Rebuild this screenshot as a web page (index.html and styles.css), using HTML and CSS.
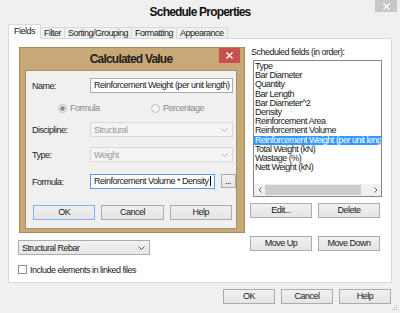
FILE: index.html
```html
<!DOCTYPE html>
<html lang="en">
<head>
    <meta charset="UTF-8">
    <meta name="viewport" content="width=device-width, initial-scale=1.0">
    <title>Schedule Properties</title>
    <link rel="stylesheet" href="styles.css">
</head>
<body>
    <div class="window">
        <div class="titlebar">
            <span class="title">Schedule Properties</span>
            <button class="win-close" title="Close">
                <svg width="7" height="7" viewBox="0 0 7 7"><path d="M0.5 0.5L6.5 6.5M6.5 0.5L0.5 6.5" stroke="#fff" stroke-width="1.4"/></svg>
            </button>
        </div>

        <div class="tabs">
            <div class="tab active">Fields</div>
            <div class="tab">Filter</div>
            <div class="tab">Sorting/Grouping</div>
            <div class="tab">Formatting</div>
            <div class="tab">Appearance</div>
        </div>

        <div class="panel">
            <div class="left-col">
                <div class="dialog">
                    <div class="dlg-title">Calculated Value</div>
                    <button class="dlg-close" title="Close">
                        <svg width="7" height="7" viewBox="0 0 7 7"><path d="M0.5 0.5L6.5 6.5M6.5 0.5L0.5 6.5" stroke="#fff" stroke-width="1.4"/></svg>
                    </button>
                    <div class="dlg-body">
                        <div class="field-row">
                            <label>Name:</label>
                            <div class="input">Reinforcement Weight (per unit length)</div>
                        </div>

                        <div class="radios">
                            <span class="radio checked"><span class="dot"></span>Formula</span>
                            <span class="radio"><span class="dot"></span>Percentage</span>
                        </div>

                        <div class="field-row gap-discipline">
                            <label>Discipline:</label>
                            <div class="select disabled">
                                <span>Structural</span>
                                <svg width="7" height="4" viewBox="0 0 7 4"><path d="M0.5 0.5L3.5 3.5L6.5 0.5" fill="none" stroke="#b5b5b5"/></svg>
                            </div>
                        </div>

                        <div class="field-row gap-type">
                            <label>Type:</label>
                            <div class="select disabled">
                                <span>Weight</span>
                                <svg width="7" height="4" viewBox="0 0 7 4"><path d="M0.5 0.5L3.5 3.5L6.5 0.5" fill="none" stroke="#b5b5b5"/></svg>
                            </div>
                        </div>

                        <div class="field-row gap-formula">
                            <label>Formula:</label>
                            <div class="formula">
                                <div class="input focused">Reinforcement Volume * Density<span class="caret"></span></div>
                                <button class="btn dots">...</button>
                            </div>
                        </div>

                        <div class="dlg-buttons">
                            <button class="btn default">OK</button>
                            <button class="btn">Cancel</button>
                            <button class="btn">Help</button>
                        </div>
                    </div>
                </div>

                <div class="select category">
                    <span>Structural Rebar</span>
                    <svg width="7" height="4" viewBox="0 0 7 4"><path d="M0.5 0.5L3.5 3.5L6.5 0.5" fill="none" stroke="#555"/></svg>
                </div>

                <label class="check"><span class="box"></span>Include elements in linked files</label>
            </div>

            <div class="right-col">
                <div class="list-label">Scheduled fields (in order):</div>
                <div class="listbox">
                    <ul>
                        <li>Type</li>
                        <li>Bar Diameter</li>
                        <li>Quantity</li>
                        <li>Bar Length</li>
                        <li>Bar Diameter^2</li>
                        <li>Density</li>
                        <li>Reinforcement Area</li>
                        <li>Reinforcement Volume</li>
                        <li class="selected">Reinforcement Weight (per unit length)</li>
                        <li>Total Weight (kN)</li>
                        <li>Wastage (%)</li>
                        <li>Nett Weight (kN)</li>
                    </ul>
                    <div class="hscroll">
                        <span class="arrow">
                            <svg width="4" height="6" viewBox="0 0 4 6"><path d="M3.5 0.5L1 3L3.5 5.5" fill="none" stroke="#606060"/></svg>
                        </span>
                        <span class="thumb"></span>
                        <span class="spacer"></span>
                        <span class="arrow">
                            <svg width="4" height="6" viewBox="0 0 4 6"><path d="M0.5 0.5L3 3L0.5 5.5" fill="none" stroke="#606060"/></svg>
                        </span>
                    </div>
                </div>
                <div class="btn-row">
                    <button class="btn">Edit...</button>
                    <button class="btn">Delete</button>
                </div>
                <div class="btn-row move">
                    <button class="btn">Move Up</button>
                    <button class="btn">Move Down</button>
                </div>
            </div>
        </div>

        <div class="footer">
            <button class="btn">OK</button>
            <button class="btn">Cancel</button>
            <button class="btn">Help</button>
        </div>

        <svg class="grip" width="6" height="6" viewBox="0 0 6 6">
            <rect x="4" y="0" width="1" height="1" fill="#b4b4b4"/>
            <rect x="2" y="2" width="1" height="1" fill="#b4b4b4"/>
            <rect x="4" y="2" width="1" height="1" fill="#b4b4b4"/>
            <rect x="0" y="4" width="1" height="1" fill="#b4b4b4"/>
            <rect x="2" y="4" width="1" height="1" fill="#b4b4b4"/>
            <rect x="4" y="4" width="1" height="1" fill="#b4b4b4"/>
        </svg>
    </div>
</body>
</html>
```

FILE: styles.css
```css
* {
    box-sizing: border-box;
}
body {
    margin: 0;
    background-color: #f0f0f0;
    font-family: "Liberation Sans", Arial, sans-serif;
    font-size: 9px;
    letter-spacing: -0.5px;
    color: #1a1a1a;
}
button {
    font: inherit;
    letter-spacing: inherit;
    color: inherit;
    padding: 0;
}
.window {
    position: relative;
    width: 400px;
    height: 313px;
    padding: 0 8px;
    overflow: hidden;
}

/* title bar */
.titlebar {
    height: 24px;
    display: flex;
    align-items: center;
    justify-content: center;
}
.title {
    font-size: 12px;
    font-weight: bold;
    letter-spacing: -0.8px;
    color: #111;
}
.win-close {
    position: absolute;
    top: 0;
    right: 3px;
    width: 22px;
    height: 12px;
    border: none;
    background-color: #c7c7c7;
    display: flex;
    align-items: center;
    justify-content: center;
}

/* tabs */
.tabs {
    display: flex;
    align-items: flex-end;
    height: 14px;
}
.tab {
    height: 11px;
    padding: 0 3px;
    line-height: 10px;
    border: 1px solid #d9d9d9;
    border-bottom: none;
    margin-right: -1px;
    background-color: #f0f0f0;
}
.tab.active {
    position: relative;
    z-index: 1;
    height: 15px;
    margin-bottom: -1px;
    padding: 0 5px;
    line-height: 13px;
    background-color: #fff;
}

/* panel */
.panel {
    height: 245px;
    border: 1px solid #d9d9d9;
    background-color: #fff;
    display: grid;
    grid-template-columns: 226px 132px;
    column-gap: 5px;
    align-items: start;
    padding: 8px 0 0 10px;
}

/* calculated value dialog */
.dialog {
    position: relative;
    height: 186px;
    background-color: #c9a878;
    border: 1px solid #a8895c;
    padding: 0 7px 3px 5px;
}
.dlg-title {
    height: 22px;
    line-height: 22px;
    text-align: center;
    font-size: 12px;
    font-weight: bold;
    letter-spacing: -0.8px;
    color: #1e1e1e;
}
.dlg-close {
    position: absolute;
    top: 0;
    right: 4px;
    width: 21px;
    height: 15px;
    border: none;
    background-color: #c75050;
    display: flex;
    align-items: center;
    justify-content: center;
}
.dlg-body {
    height: 159px;
    background-color: #f0f0f0;
    border: 1px solid #a88f6c;
    padding: 7px 3px 8px 6px;
}
.field-row {
    display: grid;
    grid-template-columns: 58px 1fr;
    align-items: center;
    height: 15px;
}
.gap-discipline {
    margin-top: 9px;
}
.gap-type {
    margin-top: 10px;
}
.gap-formula {
    margin-top: 12px;
}
.input {
    height: 15px;
    line-height: 13px;
    padding: 0 3px;
    background-color: #fff;
    border: 1px solid #abadb3;
    white-space: nowrap;
    overflow: hidden;
}
.input.focused {
    border-color: #569de5;
}
.caret {
    display: inline-block;
    width: 1px;
    height: 10px;
    margin-left: 1px;
    vertical-align: -2px;
    background-color: #000;
}
.radios {
    display: grid;
    grid-template-columns: 93px auto;
    height: 9px;
    margin-top: 11px;
    padding-left: 26px;
    color: #8a8a8a;
}
.radio {
    display: flex;
    align-items: center;
    gap: 3px;
    line-height: 9px;
}
.radio .dot {
    width: 9px;
    height: 9px;
    border-radius: 50%;
    border: 1px solid #bcbcbc;
    background-color: #f4f4f4;
}
.radio.checked .dot {
    background: radial-gradient(circle, #8c8c8c 0 2px, #f4f4f4 2.5px);
}
.select {
    height: 15px;
    padding: 0 4px 0 3px;
    display: flex;
    align-items: center;
    justify-content: space-between;
    border: 1px solid #acacac;
    background: linear-gradient(#f2f2f2, #e5e5e5);
}
.select.disabled {
    color: #9a9a9a;
    border-color: #d9d9d9;
    background: #f4f4f4;
}
.formula {
    display: flex;
    gap: 6px;
}
.formula .input {
    flex: 1;
}
.btn {
    height: 15px;
    line-height: 13px;
    border: 1px solid #acacac;
    background: linear-gradient(#f0f0f0, #e5e5e5);
    text-align: center;
}
.btn.dots {
    width: 15px;
    height: 14px;
}
.btn.default {
    border-color: #7eb4ea;
}
.dlg-buttons {
    display: grid;
    grid-template-columns: repeat(3, 1fr);
    column-gap: 6px;
    margin: 16px 0 0 1px;
    width: 199px;
}

/* below the dialog */
.category {
    width: 132px;
    margin: 7px 0 0 -1px;
}
.check {
    display: flex;
    align-items: center;
    gap: 3px;
    margin: 10px 0 0 -1px;
    height: 9px;
}
.check .box {
    width: 9px;
    height: 9px;
    border: 1px solid #8e8f8f;
    background-color: #fff;
}

/* scheduled fields */
.list-label {
    height: 11px;
    line-height: 11px;
    padding-left: 1px;
}
.listbox {
    height: 137px;
    width: 129px;
    margin: 2px 0 0 3px;
    border: 1px solid #828790;
    display: flex;
    flex-direction: column;
}
.listbox ul {
    flex: 1;
    list-style: none;
    margin: 0;
    padding: 1px 0 0;
    overflow: hidden;
}
.listbox li {
    height: 9.2px;
    line-height: 9.2px;
    padding-left: 1px;
    white-space: nowrap;
}
.listbox li.selected {
    background-color: #3399ff;
    color: #fff;
}
.hscroll {
    height: 12px;
    display: flex;
    background-color: #f0f0f0;
}
.hscroll .arrow {
    width: 11px;
    display: flex;
    align-items: center;
    justify-content: center;
}
.hscroll .thumb {
    width: 96px;
    margin: 1px 0;
    background-color: #cdcdcd;
}
.hscroll .spacer {
    flex: 1;
}
.btn-row {
    display: grid;
    grid-template-columns: 62px 62px;
    column-gap: 6px;
    margin-top: 6px;
}
.btn-row.move {
    margin-top: 18px;
}

/* dialog footer */
.footer {
    display: flex;
    justify-content: flex-end;
    gap: 6px;
    margin-top: 6px;
    padding-right: 1px;
}
.footer .btn {
    width: 52px;
}
.grip {
    position: absolute;
    right: 2px;
    bottom: 2px;
}
```
